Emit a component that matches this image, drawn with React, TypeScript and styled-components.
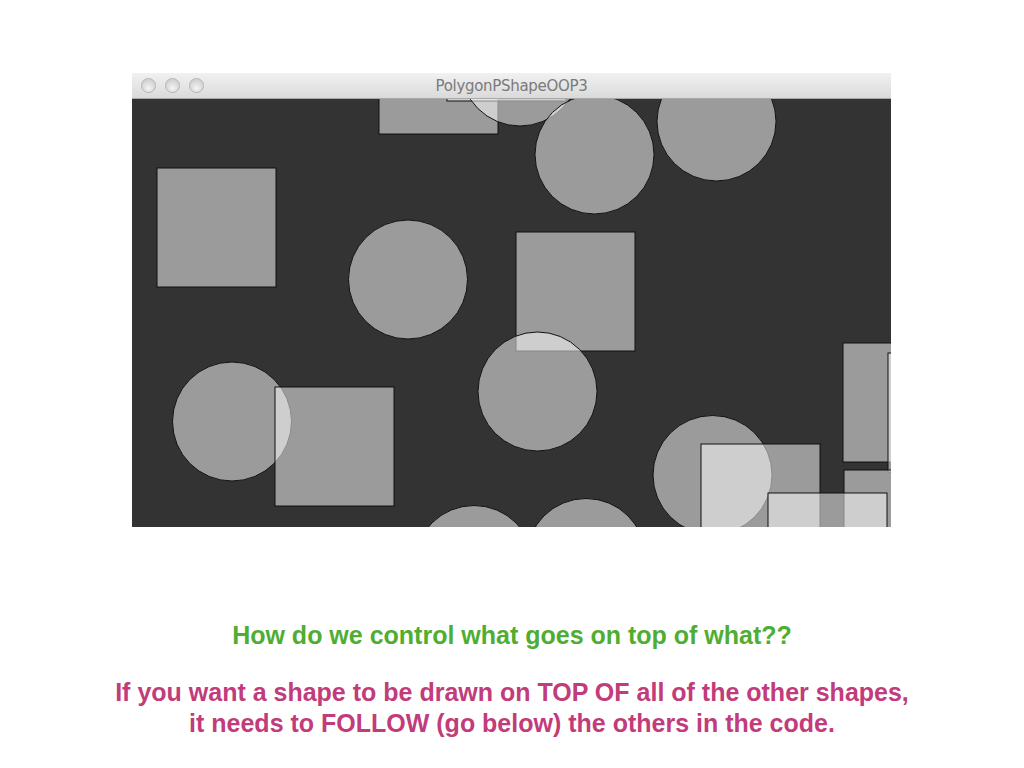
import React from "react";
import styled, { createGlobalStyle } from "styled-components";

const Global = createGlobalStyle`
  html, body { margin: 0; padding: 0; background: #ffffff; }
  body { width: 1024px; height: 768px; overflow: hidden; }
`;

const Page = styled.main`
  width: 1024px;
  height: 768px;
  display: flex;
  flex-direction: column;
  padding-top: 73px;
  box-sizing: border-box;
`;

const Window = styled.section`
  width: 759px;
  margin-left: 132px;
  display: flex;
  flex-direction: column;
`;

const TitleBar = styled.header`
  position: relative;
  height: 26px;
  display: flex;
  align-items: center;
  justify-content: center;
  background: linear-gradient(#f1f1f1, #dadada);
  border-bottom: 1px solid #a8a8a8;
  box-sizing: border-box;
`;

const Lights = styled.div`
  position: absolute;
  left: 9px;
  top: 5px;
  display: flex;
  gap: 9px;
`;

const Light = styled.span`
  width: 15px;
  height: 15px;
  border-radius: 50%;
  box-sizing: border-box;
  border: 1px solid #b4b4b4;
  background: radial-gradient(circle at 50% 70%, #f4f4f4, #d2d2d2 70%);
`;

const Title = styled.span`
  font-family: "DejaVu Sans", sans-serif;
  font-size: 15px;
  color: #7a7a7a;
  letter-spacing: -0.3px;
  margin-top: 1px;
`;

const Canvas = styled.svg`
  display: block;
  width: 759px;
  height: 428px;
  background: #333333;
`;

const Caption = styled.div`
  margin-top: 93px;
  display: flex;
  flex-direction: column;
  align-items: center;
  font-family: "Liberation Sans", Arial, sans-serif;
  font-weight: bold;
`;

const Question = styled.p`
  margin: 0;
  font-size: 25px;
  line-height: 30px;
  color: #4fae32;
`;

const Note = styled.p`
  margin: 27px 0 0;
  font-size: 25px;
  line-height: 31px;
  color: #c23b7b;
  text-align: center;
`;

type Shape = { kind: "c" | "r"; x: number; y: number };

const S = 119;
const R = 59.5;

const shapes: Shape[] = [
  { kind: "r", x: 379, y: 15 },
  { kind: "r", x: 447, y: -18 },
  { kind: "c", x: 520, y: 66.5 },
  { kind: "c", x: 594.5, y: 154.5 },
  { kind: "c", x: 716.5, y: 121.5 },
  { kind: "r", x: 157, y: 168 },
  { kind: "c", x: 408, y: 279.5 },
  { kind: "r", x: 516, y: 232 },
  { kind: "c", x: 537.5, y: 391.5 },
  { kind: "c", x: 232, y: 421.5 },
  { kind: "r", x: 275, y: 387 },
  { kind: "c", x: 474, y: 565 },
  { kind: "c", x: 586, y: 558 },
  { kind: "r", x: 843, y: 343 },
  { kind: "r", x: 888, y: 353 },
  { kind: "c", x: 712.5, y: 475 },
  { kind: "r", x: 701, y: 444 },
  { kind: "r", x: 844, y: 470 },
  { kind: "r", x: 768, y: 493 },
];

export default function App() {
  return (
    <>
      <Global />
      <Page>
        <Window>
          <TitleBar>
            <Lights>
              <Light />
              <Light />
              <Light />
            </Lights>
            <Title>PolygonPShapeOOP3</Title>
          </TitleBar>
          <Canvas viewBox="132 99 759 428" xmlns="http://www.w3.org/2000/svg">
            <g fill="rgba(255,255,255,0.51)" stroke="#111111" strokeWidth={1}>
              {shapes.map((s, i) =>
                s.kind === "c" ? (
                  <circle key={i} cx={s.x} cy={s.y} r={R} />
                ) : (
                  <rect key={i} x={s.x} y={s.y} width={S} height={S} />
                )
              )}
            </g>
          </Canvas>
        </Window>
        <Caption>
          <Question>How do we control what goes on top of what??</Question>
          <Note>
            If you want a shape to be drawn on TOP OF all of the other shapes,
            <br />
            it needs to FOLLOW (go below) the others in the code.
          </Note>
        </Caption>
      </Page>
    </>
  );
}
